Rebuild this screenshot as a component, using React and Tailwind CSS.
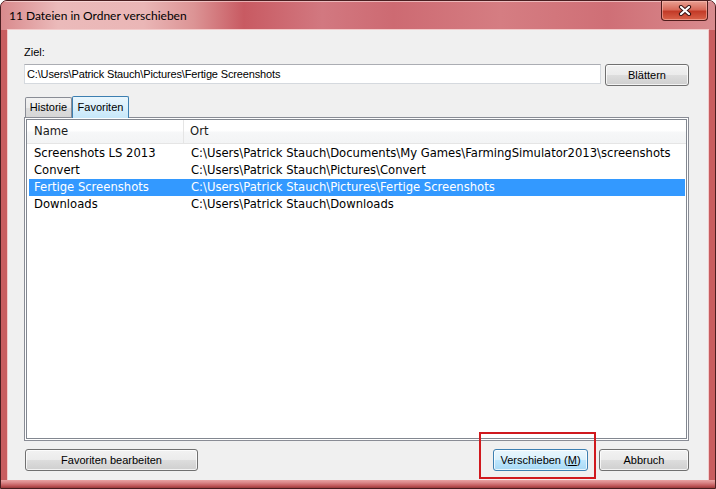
import React from "react";

const ui = { fontFamily: '"Liberation Sans", Arial, sans-serif' };
const list = { fontFamily: '"DejaVu Sans", Verdana, sans-serif' };
const title = { fontFamily: 'Lato, "Noto Sans", "Liberation Sans", sans-serif' };

const rows = [
  { name: "Screenshots LS 2013", path: "C:\\Users\\Patrick Stauch\\Documents\\My Games\\FarmingSimulator2013\\screenshots" },
  { name: "Convert", path: "C:\\Users\\Patrick Stauch\\Pictures\\Convert" },
  { name: "Fertige Screenshots", path: "C:\\Users\\Patrick Stauch\\Pictures\\Fertige Screenshots", selected: true },
  { name: "Downloads", path: "C:\\Users\\Patrick Stauch\\Downloads" },
];

function CloseGlyph() {
  return (
    <svg width="14" height="11" viewBox="0 0 14 11">
      <path d="M3 2 L11 9 M11 2 L3 9" stroke="#3a1414" strokeWidth="4.2" strokeLinecap="round" />
      <path d="M3 2 L11 9 M11 2 L3 9" stroke="#ffffff" strokeWidth="2.2" strokeLinecap="round" />
    </svg>
  );
}

function Button({ children, className = "", primary = false }) {
  const look = primary
    ? "border-[#3c7fb1] bg-[linear-gradient(to_bottom,#eaf6fd_0%,#d9f0fc_50%,#bee6fd_51%,#a7d9f5_100%)]"
    : "border-[#707070] bg-[linear-gradient(to_bottom,#f2f2f2_0%,#ebebeb_50%,#dddddd_51%,#cfcfcf_100%)]";
  return (
    <div
      style={ui}
      className={`flex h-[22px] items-center justify-center rounded-[3px] border text-[11px] text-black shadow-[inset_0_0_0_1px_rgba(255,255,255,0.75)] ${look} ${className}`}
    >
      {children}
    </div>
  );
}

export default function App() {
  return (
    <div className="relative flex h-[489px] w-[716px] flex-col overflow-hidden rounded-t-[7px] border border-[#4a1e20] bg-[#c85d60]">
      {/* title bar */}
      <div className="flex h-[29px] shrink-0 items-start justify-between bg-[linear-gradient(90deg,#d98a8d_0%,#ebbaba_8%,#eab6b6_20%,#dc9495_27%,#c85a62_34%,#d27880_45%,#cd6a72_55%,#d57d82_70%,#cf6f76_85%,#d98b8e_100%)] pl-[8px] pr-[7px] shadow-[inset_0_1px_0_rgba(255,230,230,0.6)]">
        <div style={title} className="flex h-[29px] items-center text-[12px] text-black">
          11 Dateien in Ordner verschieben
        </div>
        <div className="flex h-[20px] w-[47px] items-center justify-center rounded-b-[4px] border border-t-0 border-[#4f1c1c] bg-[linear-gradient(to_bottom,#e9a093_0%,#d86a5a_45%,#c33b28_55%,#d9624a_100%)] shadow-[inset_0_0_0_1px_rgba(255,200,190,0.5)]">
          <CloseGlyph />
        </div>
      </div>

      {/* client area */}
      <div className="mx-[7px] flex h-[450px] shrink-0 flex-col bg-[#f0f0f0] pl-[16px] pr-[19px] pt-[15px] shadow-[0_0_0_1px_#f3cccc]">
        <div style={ui} className="h-[14px] text-[11px] leading-[14px] text-black">
          Ziel:
        </div>

        <div className="mt-[5px] flex h-[22px] items-start gap-[4px]">
          <div
            style={ui}
            className="flex h-[20px] flex-1 items-center border border-[#d5d9de] border-t-[#abadb3] bg-white pl-[2px] text-[11px] tracking-[-0.15px] text-black"
          >
            C:\Users\Patrick Stauch\Pictures\Fertige Screenshots
          </div>
          <Button className="w-[84px]">Blättern</Button>
        </div>

        {/* tabs */}
        <div className="mt-[10px] flex h-[21px] items-end pl-[1px]">
          <div
            style={ui}
            className="flex h-[20px] w-[47px] items-center justify-center rounded-t-[2px] border border-b-0 border-[#898c95] bg-[linear-gradient(to_bottom,#f2f2f2_0%,#ebebeb_50%,#dddddd_51%,#d6d6d6_100%)] text-[11px] text-black"
          >
            Historie
          </div>
          <div
            style={ui}
            className="relative z-10 -mb-px flex h-[22px] w-[57px] items-center justify-center rounded-t-[2px] border border-b-0 border-[#3c7fb1] bg-[linear-gradient(to_bottom,#eaf6fd_0%,#d9f0fc_50%,#c6e7f9_100%)] text-[11px] text-black"
          >
            Favoriten
          </div>
        </div>

        {/* tab page with list view */}
        <div className="flex h-[324px] flex-col border border-[#898c95] bg-white p-px">
          <div className="flex flex-1 flex-col border border-[#828790] bg-white">
            <div
              style={list}
              className="flex h-[24px] shrink-0 border-b border-[#e5e5e5] bg-[linear-gradient(to_bottom,#ffffff_0%,#ffffff_45%,#f6f7f8_55%,#f3f4f5_100%)] text-[11.6px] text-[#1a1a1a]"
            >
              <div className="flex w-[157px] items-center border-r border-[#e5e5e5] pl-[7px]">Name</div>
              <div className="flex items-center pl-[6px]">Ort</div>
            </div>
            <div className="ml-[2px] mr-px flex flex-col pt-px">
              {rows.map((r) => (
                <div
                  key={r.name}
                  style={list}
                  className={`flex h-[17px] items-center text-[11.6px] ${
                    r.selected ? "bg-[#3399ff] text-white" : "text-black"
                  }`}
                >
                  <div className="w-[157px] shrink-0 whitespace-nowrap pl-[5px]">{r.name}</div>
                  <div className="whitespace-nowrap pl-[5px]">{r.path}</div>
                </div>
              ))}
            </div>
          </div>
        </div>

        {/* dialog buttons */}
        <div className="mt-[8px] flex h-[22px] items-center pl-[1px]">
          <Button className="w-[173px]">Favoriten bearbeiten</Button>
          <div className="flex-1" />
          <Button primary className="w-[95px]">
            Verschieben (<span className="underline">M</span>)
          </Button>
          <Button className="ml-[11px] w-[90px]">Abbruch</Button>
        </div>
      </div>

      {/* bottom frame */}
      <div className="flex-1 bg-[linear-gradient(to_bottom,#e9a3a3_0%,#d98486_35%,#c25a5c_70%,#9c3a3c_100%)]" />

      {/* annotation box around the move button */}
      <div className="pointer-events-none absolute left-[478px] top-[431px] h-[47px] w-[117px] border-2 border-[#d0191e]" />
    </div>
  );
}
